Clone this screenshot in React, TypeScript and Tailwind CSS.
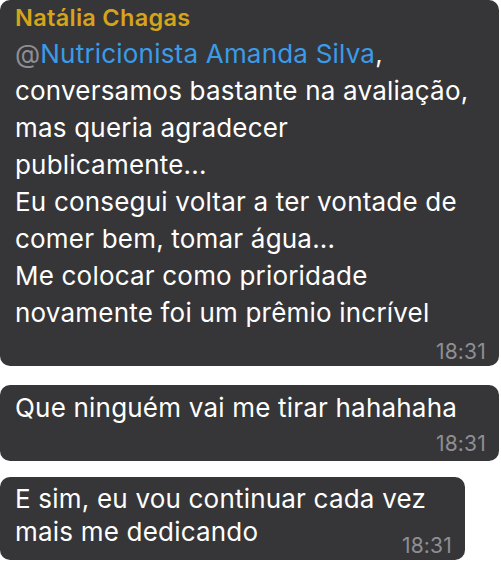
const bubble = "rounded-[10px] bg-[#363638] pl-[15px] pr-[13px] text-white";

function Time() {
  return <span className="text-[21px] leading-[24px] text-[#8e8e93] tracking-[0.2px]">18:31</span>;
}

export default function App() {
  return (
    <div className="w-[501px] h-[561px] bg-white flex flex-col font-['Inter',sans-serif] text-[26px] tracking-[0.2px]">
      {/* Message with author + mention */}
      <div className={`${bubble} w-[499px] h-[366px] pt-[1px] leading-[37px]`}>
        <div className="text-[23.5px] leading-[34px] font-semibold text-[#d6a419] tracking-[0.3px]">
          Natália Chagas
        </div>
        <div>
          <span className="text-[#8e8e93]">@</span>
          <span className="text-[#3a9ce8]">Nutricionista Amanda Silva</span>,
        </div>
        <div>conversamos bastante na avaliação,</div>
        <div>mas queria agradecer</div>
        <div>publicamente...</div>
        <div>Eu consegui voltar a ter vontade de</div>
        <div>comer bem, tomar água...</div>
        <div>Me colocar como prioridade</div>
        <div>novamente foi um prêmio incrível</div>
        <div className="flex justify-end mt-[9px]">
          <Time />
        </div>
      </div>

      <div className={`${bubble} w-[499px] h-[76px] mt-[19px] pt-[4px] leading-[37px]`}>
        <div>Que ninguém vai me tirar hahahaha</div>
        <div className="flex justify-end mt-[6px]">
          <Time />
        </div>
      </div>

      <div className={`${bubble} w-[465px] h-[83px] mt-[16px] pt-[5px] leading-[33px]`}>
        <div>E sim, eu vou continuar cada vez</div>
        <div className="flex items-end justify-between">
          <span>mais me dedicando</span>
          <span className="-mb-[10px] flex">
            <Time />
          </span>
        </div>
      </div>
    </div>
  );
}
